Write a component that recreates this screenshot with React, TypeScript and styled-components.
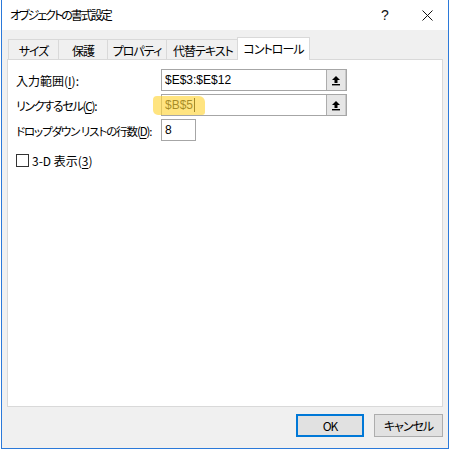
import React from 'react';
import styled, { createGlobalStyle } from 'styled-components';

const GlobalStyle = createGlobalStyle`
  html, body {
    margin: 0;
    padding: 0;
    background: #fff;
  }
  body {
    font-family: "Noto Sans CJK JP", "Noto Sans", sans-serif;
    font-size: 12px;
    color: #000;
    font-feature-settings: "palt";
  }
  * { box-sizing: border-box; }
`;

const Window = styled.div`
  margin-left: 1px;
  width: 448px;
  height: 449px;
  border: 1px solid #2b79d9;
  border-top: none;
  background: #f0f0f0;
  display: flex;
  flex-direction: column;
`;

const TitleBar = styled.div`
  height: 30px;
  background: #fff;
  display: flex;
  align-items: center;
  padding-left: 8px;
`;

const TitleText = styled.div`
  flex: 1;
  font-size: 12px;
  letter-spacing: -2px;
  line-height: 1;
`;

const TitleButton = styled.div`
  width: 42px;
  height: 30px;
  display: flex;
  align-items: center;
  justify-content: center;
  font-family: "Liberation Sans", sans-serif;
  font-size: 14px;
  color: #111;
`;

const Body = styled.div`
  flex: 1;
  display: flex;
  flex-direction: column;
  padding: 7px 5px 0 5px;
`;

const TabRow = styled.div`
  display: flex;
  align-items: flex-end;
  padding-left: 1px;
  margin-bottom: -1px;
`;

const Tab = styled.div<{ $w: number; $active?: boolean }>`
  width: ${({ $w }) => $w}px;
  height: ${({ $active }) => ($active ? 23 : 21)}px;
  margin-right: -1px;
  margin-left: ${({ $active }) => ($active ? -2 : 0)}px;
  border: 1px solid #d9d9d9;
  border-bottom: none;
  background: ${({ $active }) => ($active ? '#fff' : '#f0f0f0')};
  position: ${({ $active }) => ($active ? 'relative' : 'static')};
  z-index: ${({ $active }) => ($active ? 1 : 'auto')};
  display: flex;
  align-items: center;
  justify-content: center;
  padding-bottom: ${({ $active }) => ($active ? 1 : 0)}px;
  font-size: 12px;
  letter-spacing: -1px;
  color: #000;
`;

const Panel = styled.div`
  flex: 1;
  background: #fff;
  border: 1px solid #d9d9d9;
  padding: 9px 8px 0 8px;
  display: flex;
  flex-direction: column;
`;

const FieldGrid = styled.div`
  display: grid;
  grid-template-columns: 145px auto;
  row-gap: 3px;
  align-items: center;
`;

const Label = styled.div<{ $ls?: number; $size?: number }>`
  font-size: ${({ $size = 12 }) => $size}px;
  white-space: pre;
  letter-spacing: ${({ $ls = 0 }) => $ls}px;
  padding-top: 1px;
`;

const Key = styled.span`
  text-decoration: underline;
  text-underline-offset: 2px;
`;

const InputBox = styled.div<{ $w: number }>`
  position: relative;
  width: ${({ $w }) => $w}px;
  height: 22px;
  border: 1px solid #a6a6a6;
  background: #fff;
  display: flex;
  align-items: stretch;
`;

const InputText = styled.div`
  flex: 1;
  display: flex;
  align-items: center;
  padding-left: 3px;
  font-family: "Liberation Sans", sans-serif;
  font-size: 12px;
  color: #000;
`;

const RefButton = styled.div`
  width: 20px;
  background: #e6e6e6;
  border-left: 1px solid #adadad;
  border-right: 1px solid #c9c9c9;
  display: flex;
  align-items: center;
  justify-content: center;
`;

const Caret = styled.span`
  display: inline-block;
  width: 1px;
  height: 14px;
  background: #000;
  margin-left: 1px;
`;

const Marker = styled.div`
  position: absolute;
  left: -9px;
  top: 1px;
  width: 52px;
  height: 19px;
  border-radius: 4px 6px 3px 5px;
  background: rgba(255, 214, 60, 0.65);
  pointer-events: none;
`;

const CheckRow = styled.label`
  display: flex;
  align-items: center;
  gap: 3px;
  margin-top: 11px;
  font-size: 12px;
`;

const CheckBox = styled.span`
  width: 13px;
  height: 13px;
  border: 1px solid #333;
  background: #fff;
`;

const Footer = styled.div`
  height: 41px;
  display: flex;
  justify-content: flex-end;
  gap: 10px;
  padding: 7px 0 0 0;
`;

const Button = styled.div<{ $default?: boolean }>`
  width: ${({ $default }) => ($default ? 68 : 69)}px;
  height: 23px;
  background: #e1e1e1;
  border: ${({ $default }) => ($default ? '2px solid #0078d7' : '1px solid #adadad')};
  display: flex;
  align-items: center;
  justify-content: center;
  font-size: 12px;
  letter-spacing: -1px;
  color: #000;
`;

const UpArrow = () => (
  <svg width="10" height="11" viewBox="0 0 10 11">
    <path d="M5 1 L9 5 L6.5 5 L6.5 8 L3.5 8 L3.5 5 L1 5 Z" fill="#000" />
    <rect x="1" y="9" width="8" height="1.4" fill="#000" />
  </svg>
);

const CloseIcon = () => (
  <svg width="11" height="11" viewBox="0 0 11 11">
    <path d="M0.5 0.5 L10.5 10.5 M10.5 0.5 L0.5 10.5" stroke="#111" strokeWidth="1" />
  </svg>
);

const tabs = [
  { label: 'サイズ', w: 51 },
  { label: '保護', w: 50 },
  { label: 'プロパティ', w: 60 },
  { label: '代替テキスト', w: 74 },
  { label: 'コントロール', w: 73, active: true },
];

const App: React.FC = () => {
  return (
    <>
      <GlobalStyle />
      <Window>
        <TitleBar>
          <TitleText>オブジェクトの書式設定</TitleText>
          <TitleButton>?</TitleButton>
          <TitleButton><CloseIcon /></TitleButton>
        </TitleBar>
        <Body>
          <TabRow>
            {tabs.map(t => (
              <Tab key={t.label} $w={t.w} $active={t.active}>{t.label}</Tab>
            ))}
          </TabRow>
          <Panel>
            <FieldGrid>
              <Label>入力範囲(<Key>I</Key>):</Label>
              <InputBox $w={186}>
                <InputText>$E$3:$E$12</InputText>
                <RefButton><UpArrow /></RefButton>
              </InputBox>

              <Label $ls={-1.3}>リンクするセル(<Key>C</Key>):</Label>
              <InputBox $w={186}>
                <InputText>$B$5<Caret /></InputText>
                <RefButton><UpArrow /></RefButton>
                <Marker />
              </InputBox>

              <Label $ls={-1.1} $size={11.5}>ドロップダウン リストの行数(<Key>D</Key>):</Label>
              <InputBox $w={35}>
                <InputText>8</InputText>
              </InputBox>
            </FieldGrid>
            <CheckRow>
              <CheckBox />
              <span>3-D 表示(<Key>3</Key>)</span>
            </CheckRow>
          </Panel>
          <Footer>
            <Button $default>OK</Button>
            <Button>キャンセル</Button>
          </Footer>
        </Body>
      </Window>
    </>
  );
};

export default App;
